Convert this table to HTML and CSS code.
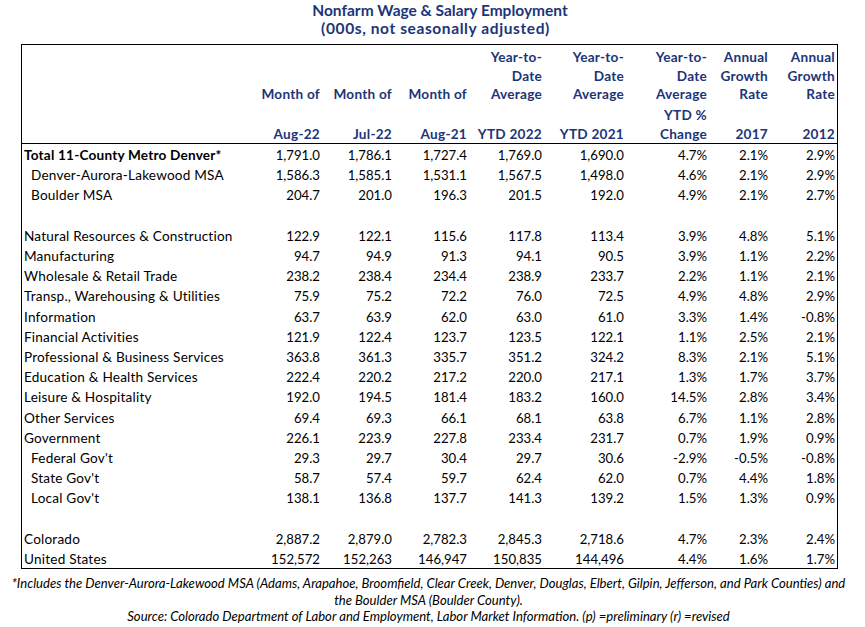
FILE: index.html
```html
<!DOCTYPE html>
<html lang="en">
<head>
<meta charset="utf-8">
<title>Nonfarm Wage &amp; Salary Employment</title>
<link rel="stylesheet" href="styles.css">
</head>
<body>
<div class="page">
  <h1 class="title">
    <span class="t1">Nonfarm Wage &amp; Salary Employment</span>
    <span class="t2">(000s, not seasonally adjusted)</span>
  </h1>
  <table class="emp">
    <colgroup>
      <col class="c-label">
      <col class="c-m1">
      <col class="c-m2">
      <col class="c-m3">
      <col class="c-y1">
      <col class="c-y2">
      <col class="c-pct">
      <col class="c-g1">
      <col class="c-g2">
    </colgroup>
    <thead>
      <tr>
        <th class="hlabel"></th>
        <th><div class="hl">&nbsp;</div><div class="hl">&nbsp;</div><div class="hl">Month of</div><div class="hl gap">&nbsp;</div><div class="hl">Aug-22</div></th>
        <th><div class="hl">&nbsp;</div><div class="hl">&nbsp;</div><div class="hl">Month of</div><div class="hl gap">&nbsp;</div><div class="hl">Jul-22</div></th>
        <th><div class="hl">&nbsp;</div><div class="hl">&nbsp;</div><div class="hl">Month of</div><div class="hl gap">&nbsp;</div><div class="hl">Aug-21</div></th>
        <th><div class="hl">Year-to-</div><div class="hl">Date</div><div class="hl">Average</div><div class="hl gap">&nbsp;</div><div class="hl">YTD 2022</div></th>
        <th><div class="hl">Year-to-</div><div class="hl">Date</div><div class="hl">Average</div><div class="hl gap">&nbsp;</div><div class="hl">YTD 2021</div></th>
        <th><div class="hl">Year-to-</div><div class="hl">Date</div><div class="hl">Average</div><div class="hl gap">YTD %</div><div class="hl">Change</div></th>
        <th><div class="hl">Annual</div><div class="hl">Growth</div><div class="hl">Rate</div><div class="hl gap">&nbsp;</div><div class="hl">2017</div></th>
        <th><div class="hl">Annual</div><div class="hl">Growth</div><div class="hl">Rate</div><div class="hl gap">&nbsp;</div><div class="hl">2012</div></th>
      </tr>
    </thead>
    <tbody>
      <tr><td class="lbl strong">Total 11-County Metro Denver*</td><td>1,791.0</td><td>1,786.1</td><td>1,727.4</td><td>1,769.0</td><td>1,690.0</td><td>4.7%</td><td>2.1%</td><td>2.9%</td></tr>
      <tr><td class="lbl sub">Denver-Aurora-Lakewood MSA</td><td>1,586.3</td><td>1,585.1</td><td>1,531.1</td><td>1,567.5</td><td>1,498.0</td><td>4.6%</td><td>2.1%</td><td>2.9%</td></tr>
      <tr><td class="lbl sub">Boulder MSA</td><td>204.7</td><td>201.0</td><td>196.3</td><td>201.5</td><td>192.0</td><td>4.9%</td><td>2.1%</td><td>2.7%</td></tr>
      <tr class="blank"><td class="lbl">&nbsp;</td><td></td><td></td><td></td><td></td><td></td><td></td><td></td><td></td></tr>
      <tr><td class="lbl">Natural Resources &amp; Construction</td><td>122.9</td><td>122.1</td><td>115.6</td><td>117.8</td><td>113.4</td><td>3.9%</td><td>4.8%</td><td>5.1%</td></tr>
      <tr><td class="lbl">Manufacturing</td><td>94.7</td><td>94.9</td><td>91.3</td><td>94.1</td><td>90.5</td><td>3.9%</td><td>1.1%</td><td>2.2%</td></tr>
      <tr><td class="lbl">Wholesale &amp; Retail Trade</td><td>238.2</td><td>238.4</td><td>234.4</td><td>238.9</td><td>233.7</td><td>2.2%</td><td>1.1%</td><td>2.1%</td></tr>
      <tr><td class="lbl">Transp., Warehousing &amp; Utilities</td><td>75.9</td><td>75.2</td><td>72.2</td><td>76.0</td><td>72.5</td><td>4.9%</td><td>4.8%</td><td>2.9%</td></tr>
      <tr><td class="lbl">Information</td><td>63.7</td><td>63.9</td><td>62.0</td><td>63.0</td><td>61.0</td><td>3.3%</td><td>1.4%</td><td>-0.8%</td></tr>
      <tr><td class="lbl">Financial Activities</td><td>121.9</td><td>122.4</td><td>123.7</td><td>123.5</td><td>122.1</td><td>1.1%</td><td>2.5%</td><td>2.1%</td></tr>
      <tr><td class="lbl">Professional &amp; Business Services</td><td>363.8</td><td>361.3</td><td>335.7</td><td>351.2</td><td>324.2</td><td>8.3%</td><td>2.1%</td><td>5.1%</td></tr>
      <tr><td class="lbl">Education &amp; Health Services</td><td>222.4</td><td>220.2</td><td>217.2</td><td>220.0</td><td>217.1</td><td>1.3%</td><td>1.7%</td><td>3.7%</td></tr>
      <tr><td class="lbl">Leisure &amp; Hospitality</td><td>192.0</td><td>194.5</td><td>181.4</td><td>183.2</td><td>160.0</td><td>14.5%</td><td>2.8%</td><td>3.4%</td></tr>
      <tr><td class="lbl">Other Services</td><td>69.4</td><td>69.3</td><td>66.1</td><td>68.1</td><td>63.8</td><td>6.7%</td><td>1.1%</td><td>2.8%</td></tr>
      <tr><td class="lbl">Government</td><td>226.1</td><td>223.9</td><td>227.8</td><td>233.4</td><td>231.7</td><td>0.7%</td><td>1.9%</td><td>0.9%</td></tr>
      <tr><td class="lbl sub">Federal Gov't</td><td>29.3</td><td>29.7</td><td>30.4</td><td>29.7</td><td>30.6</td><td>-2.9%</td><td>-0.5%</td><td>-0.8%</td></tr>
      <tr><td class="lbl sub">State Gov't</td><td>58.7</td><td>57.4</td><td>59.7</td><td>62.4</td><td>62.0</td><td>0.7%</td><td>4.4%</td><td>1.8%</td></tr>
      <tr><td class="lbl sub">Local Gov't</td><td>138.1</td><td>136.8</td><td>137.7</td><td>141.3</td><td>139.2</td><td>1.5%</td><td>1.3%</td><td>0.9%</td></tr>
      <tr class="blank"><td class="lbl">&nbsp;</td><td></td><td></td><td></td><td></td><td></td><td></td><td></td><td></td></tr>
      <tr><td class="lbl">Colorado</td><td>2,887.2</td><td>2,879.0</td><td>2,782.3</td><td>2,845.3</td><td>2,718.6</td><td>4.7%</td><td>2.3%</td><td>2.4%</td></tr>
      <tr><td class="lbl">United States</td><td>152,572</td><td>152,263</td><td>146,947</td><td>150,835</td><td>144,496</td><td>4.4%</td><td>1.6%</td><td>1.7%</td></tr>
    </tbody>
  </table>
  <div class="notes">
    <p class="note">*Includes the Denver-Aurora-Lakewood MSA (Adams, Arapahoe, Broomfield, Clear Creek, Denver, Douglas, Elbert, Gilpin, Jefferson, and Park Counties) and</p>
    <p class="note">the Boulder MSA (Boulder County).</p>
    <p class="note">Source: Colorado Department of Labor and Employment, Labor Market Information. (p) =preliminary (r) =revised</p>
  </div>
</div>
</body>
</html>
```
FILE: styles.css
```css
* { box-sizing: border-box; }

body {
  margin: 0;
  background: #ffffff;
  color: #000000;
  font-family: Lato, "Open Sans", "Liberation Sans", sans-serif;
}

.page {
  width: 865px;
}

.title {
  margin: 0 0 7px 0;
  padding-top: 1px;
  font-size: 15.5px;
  font-weight: 700;
  line-height: 18px;
  color: #1c3578;
  text-align: center;
}

.title .t1,
.title .t2 {
  display: block;
}

.title .t1 {
  padding-left: 15px;
}

.title .t2 {
  padding-left: 6px;
  letter-spacing: 0.6px;
}

.emp {
  margin-left: 21px;
  width: 817px;
  table-layout: fixed;
  border-collapse: separate;
  border-spacing: 0;
  border: 1px solid #000000;
  font-size: 13.2px;
}

.c-label { width: 230px; }
.c-m1 { width: 70px; }
.c-m2 { width: 72px; }
.c-m3 { width: 75px; }
.c-y1 { width: 75px; }
.c-y2 { width: 82px; }
.c-pct { width: 83px; }
.c-g1 { width: 61px; }
.c-g2 { width: 67px; }

.emp th {
  padding: 3px 2px 0 0;
  vertical-align: top;
  text-align: right;
  font-size: 13.6px;
  letter-spacing: 0.25px;
  font-weight: 700;
  color: #1c3578;
  border-bottom: 1px solid #000000;
  white-space: nowrap;
}

.emp .hl {
  height: 18.5px;
  line-height: 18.5px;
}

.emp .hl.gap {
  margin-top: 2.5px;
}

.emp td {
  height: 20.2px;
  padding: 3px 2px 0 0;
  line-height: 17.2px;
  text-align: right;
  vertical-align: top;
  white-space: nowrap;
}

.emp td.lbl {
  text-align: left;
  padding-left: 2px;
  font-size: 13.6px;
  letter-spacing: 0.2px;
}

.emp td.sub {
  padding-left: 9px;
}

.emp td.strong {
  font-weight: 700;
}

.notes {
  width: 857px;
  padding-top: 6px;
  text-align: center;
  font-style: italic;
  font-size: 13.1px;
  line-height: 16.5px;
}

.note {
  margin: 0;
  white-space: nowrap;
}
```
